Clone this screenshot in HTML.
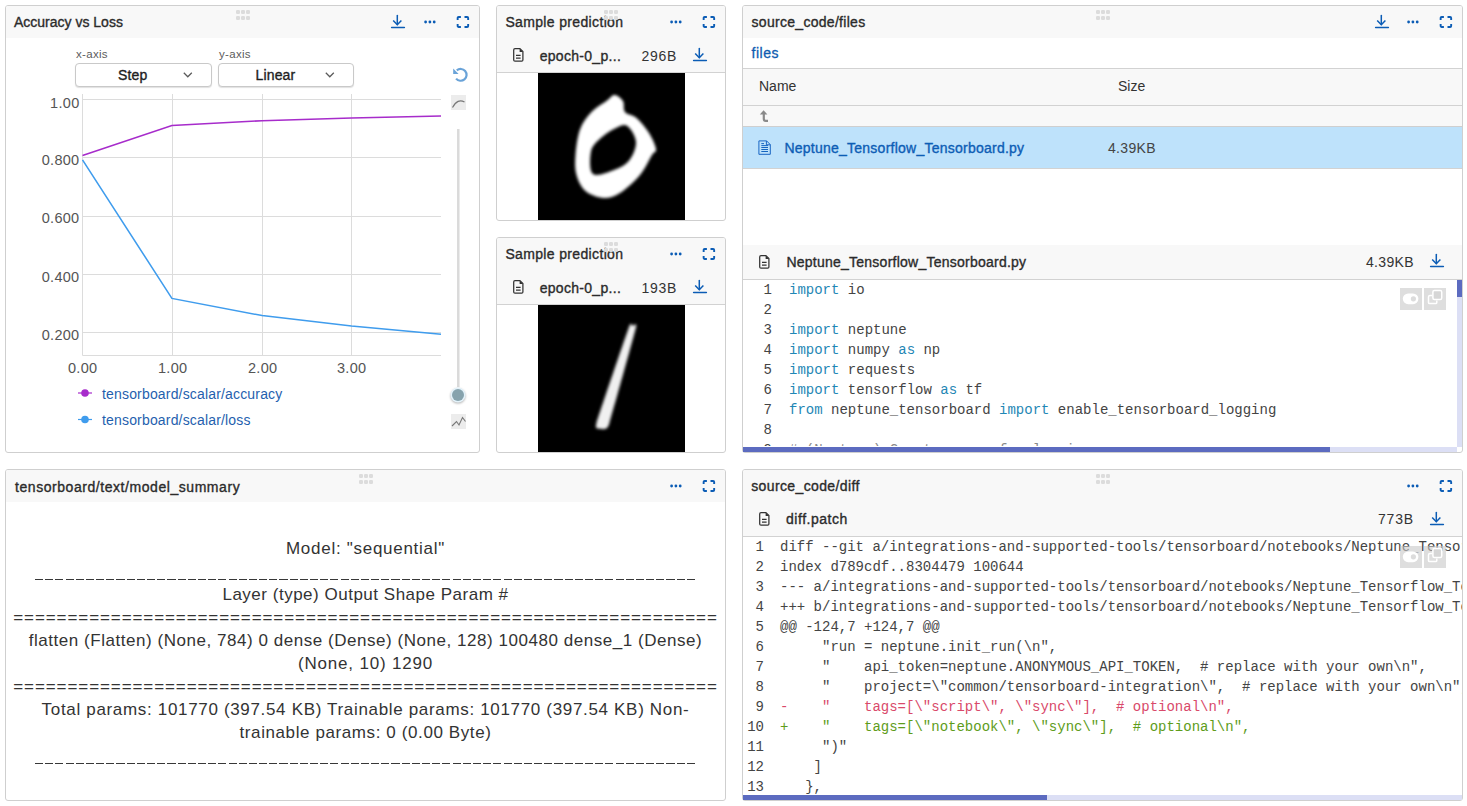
<!DOCTYPE html>
<html><head><meta charset="utf-8">
<style>
*{box-sizing:border-box;margin:0;padding:0}
html,body{width:1467px;height:806px;overflow:hidden;background:#fff}
body{position:relative;font-family:"Liberation Sans",sans-serif;color:#2e2e2e}
.a{position:absolute}
.p{position:absolute;border:1px solid #cfcfcf;border-radius:3px;background:#fff;overflow:hidden}
.hd{position:absolute;left:0;top:0;right:0;height:32px;background:#f8f8f8}
.t{position:absolute;white-space:pre;line-height:1}
.ttl{font-weight:400;font-size:13px;color:#2b2b2b;-webkit-text-stroke:0.35px currentColor}
.ic{position:absolute;overflow:visible}
.handle{position:absolute;width:14px;height:9px}
.mono{font-family:"Liberation Mono",monospace;font-size:14px;color:#444}
.kw{color:#1f87b5}
.sep{position:absolute;left:0;right:0;height:1px;background:#d2d2d2}
</style></head><body>

<!-- ============ PANEL 1 : Accuracy vs Loss ============ -->
<div class="p" style="left:5px;top:5px;width:475px;height:448px">
  <div class="hd"></div>
</div>


<!-- P1 content -->
<div class="t ttl" style="left:14px;top:15.15px;font-size:14px;letter-spacing:-0.002px">Accuracy vs Loss</div>
<svg class="ic" style="left:236px;top:10px" width="14" height="10"><g fill="#dcdcdc"><rect x="0" y="0" width="4" height="4" rx="1.3"/><rect x="5" y="0" width="4" height="4" rx="1.3"/><rect x="10" y="0" width="4" height="4" rx="1.3"/><rect x="0" y="6" width="4" height="4" rx="1.3"/><rect x="5" y="6" width="4" height="4" rx="1.3"/><rect x="10" y="6" width="4" height="4" rx="1.3"/></g></svg>
<svg class="ic" style="left:391px;top:15px" width="14" height="14"><g stroke="#0b5cb5" stroke-width="1.5" fill="none" stroke-linecap="round"><path d="M6.3 0.6V9.6"/><path d="M2.2 5.6L6.3 9.8L10.4 5.6" stroke-linecap="butt"/><path d="M0.6 12.4H13.4"/></g></svg>
<svg class="ic" style="left:423px;top:20px" width="14" height="4"><g fill="#0b5cb5"><circle cx="2.6" cy="2" r="1.4"/><circle cx="6.9" cy="2" r="1.4"/><circle cx="11.2" cy="2" r="1.4"/></g></svg>
<svg class="ic" style="left:457px;top:16px" width="12" height="12"><path d="M0.65 3.9V2Q0.65 0.95 1.7 0.95H3.9M7.5 0.95H10.1Q11.15 0.95 11.15 2V3.9M11.15 7.9V9.9Q11.15 10.95 10.1 10.95H7.5M3.9 10.95H1.7Q0.65 10.95 0.65 9.9V7.9" stroke="#0b5cb5" stroke-width="1.9" fill="none"/></svg>

<div class="t" style="left:76px;top:49.2px;font-size:11.5px;letter-spacing:0.3px;color:#5c5c5c">x-axis</div>
<div class="t" style="left:219px;top:49.2px;font-size:11.5px;letter-spacing:0.3px;color:#5c5c5c">y-axis</div>
<div class="a" style="left:75px;top:63px;width:137px;height:24px;border:1px solid #c9c9c9;border-radius:4px;box-shadow:0 1px 1px rgba(0,0,0,.12);background:#fff"></div>
<div class="a" style="left:218px;top:63px;width:136px;height:24px;border:1px solid #c9c9c9;border-radius:4px;box-shadow:0 1px 1px rgba(0,0,0,.12);background:#fff"></div>
<div class="t ttl" style="left:118px;top:68.2px;font-size:14px;letter-spacing:0.15px;color:#1e1e1e">Step</div>
<div class="t ttl" style="left:255.5px;top:68.2px;font-size:14px;letter-spacing:0.15px;color:#1e1e1e">Linear</div>
<svg class="ic" style="left:183px;top:72px" width="10" height="6"><path d="M0.8 0.8L4.8 4.8L8.8 0.8" stroke="#5a5a5a" stroke-width="1.25" fill="none"/></svg>
<svg class="ic" style="left:325px;top:72px" width="10" height="6"><path d="M0.8 0.8L4.8 4.8L8.8 0.8" stroke="#5a5a5a" stroke-width="1.25" fill="none"/></svg>

<svg class="ic" style="left:0;top:0" width="480" height="452">
 <g stroke="#dcdcdc" stroke-width="1" fill="none">
  <path d="M83 99.5H441M83 157.5H441M83 216.5H441M83 274.5H441M83 332.5H441"/>
  <path d="M172.5 94V355M262.5 94V355M351.5 94V355"/>
  <path d="M82.5 94V355.5H441"/>
 </g>
 <polyline points="82.5,155.4 171.9,125.4 262.1,120.7 351.5,118.1 441,115.9" stroke="#a72ccb" stroke-width="1.55" fill="none"/>
 <polyline points="82.5,159.8 171.9,298.4 262.1,315.6 351.5,326.1 441,334.2" stroke="#3f9ced" stroke-width="1.55" fill="none"/>
 <path d="M458.3 129V387" stroke="#dadada" stroke-width="2.5"/>
 <circle cx="458" cy="395" r="7.5" fill="#e3f2fa" style="filter:drop-shadow(0 1px 1px rgba(0,0,0,.3))"/>
 <circle cx="458" cy="395" r="6" fill="#87a3ad"/>
 <rect x="451" y="95" width="15" height="15" fill="#ececec"/>
 <path d="M452.5 107.5C456 101 460 99.5 464.5 102" stroke="#777" stroke-width="1.2" fill="none"/>
 <rect x="451" y="414" width="15" height="15" fill="#ececec"/>
 <path d="M452 426L456.5 421.5L459 425L462.5 417.5L465.5 421.5" stroke="#777" stroke-width="1.1" fill="none"/>
 <path d="M456.8 70.4A5.9 5.9 0 1 1 456.1 78.6" stroke="#6aa3d8" stroke-width="2.2" fill="none"/>
 <path d="M453.2 68.6V73.9H458.6Z" fill="#6aa3d8"/>
 <line x1="78" y1="393" x2="92" y2="393" stroke="#a72ccb" stroke-width="1.2"/>
 <circle cx="85" cy="393" r="3.8" fill="#a72ccb"/>
 <line x1="78" y1="419.5" x2="92" y2="419.5" stroke="#3f9ced" stroke-width="1.2"/>
 <circle cx="85" cy="419.5" r="3.8" fill="#3f9ced"/>
</svg>
<div class="t" style="right:1387.5px;top:95.5px;font-size:14.5px;letter-spacing:0.3px;color:#555">1.00</div>
<div class="t" style="right:1387.5px;top:153px;font-size:14.5px;letter-spacing:0.3px;color:#555">0.800</div>
<div class="t" style="right:1387.5px;top:211px;font-size:14.5px;letter-spacing:0.3px;color:#555">0.600</div>
<div class="t" style="right:1387.5px;top:270px;font-size:14.5px;letter-spacing:0.3px;color:#555">0.400</div>
<div class="t" style="right:1387.5px;top:328px;font-size:14.5px;letter-spacing:0.3px;color:#555">0.200</div>
<div class="t" style="left:68px;top:360.5px;font-size:14.5px;letter-spacing:0.3px;color:#555">0.00</div>
<div class="t" style="left:158px;top:360.5px;font-size:14.5px;letter-spacing:0.3px;color:#555">1.00</div>
<div class="t" style="left:248px;top:360.5px;font-size:14.5px;letter-spacing:0.3px;color:#555">2.00</div>
<div class="t" style="left:337px;top:360.5px;font-size:14.5px;letter-spacing:0.3px;color:#555">3.00</div>
<div class="t" style="left:102px;top:387px;font-size:14px;letter-spacing:0.17px;color:#1f5fae">tensorboard/scalar/accuracy</div>
<div class="t" style="left:102px;top:413px;font-size:14px;letter-spacing:0.17px;color:#1f5fae">tensorboard/scalar/loss</div>

<!-- ============ PANEL 2 ============ -->
<div class="p" style="left:496px;top:5px;width:230px;height:216px">
  <div class="hd" style="height:66px"></div>
  <div class="sep" style="top:66px"></div>
</div>

<!-- ============ PANEL 3 ============ -->
<div class="p" style="left:496px;top:237px;width:230px;height:216px">
  <div class="hd" style="height:66px"></div>
  <div class="sep" style="top:66px"></div>
</div>

<div class="t ttl" style="left:505.4px;top:15.15px;font-size:14px;letter-spacing:0.349px">Sample prediction</div>
<svg class="ic" style="left:604px;top:10px" width="14" height="10"><g fill="#dcdcdc"><rect x="0" y="0" width="4" height="4" rx="1.3"/><rect x="5" y="0" width="4" height="4" rx="1.3"/><rect x="10" y="0" width="4" height="4" rx="1.3"/><rect x="0" y="6" width="4" height="4" rx="1.3"/><rect x="5" y="6" width="4" height="4" rx="1.3"/><rect x="10" y="6" width="4" height="4" rx="1.3"/></g></svg>
<svg class="ic" style="left:669px;top:20px" width="14" height="4"><g fill="#0b5cb5"><circle cx="2.6" cy="2" r="1.4"/><circle cx="6.9" cy="2" r="1.4"/><circle cx="11.2" cy="2" r="1.4"/></g></svg>
<svg class="ic" style="left:703px;top:16px" width="12" height="12"><path d="M0.65 3.9V2Q0.65 0.95 1.7 0.95H3.9M7.5 0.95H10.1Q11.15 0.95 11.15 2V3.9M11.15 7.9V9.9Q11.15 10.95 10.1 10.95H7.5M3.9 10.95H1.7Q0.65 10.95 0.65 9.9V7.9" stroke="#0b5cb5" stroke-width="1.9" fill="none"/></svg>
<svg class="ic" style="left:513px;top:48px" width="11" height="14"><path d="M2 0.6H6.9L9.9 3.6V11.9Q9.9 13.1 8.7 13.1H2Q0.7 13.1 0.7 11.9V1.9Q0.7 0.6 2 0.6Z" stroke="#333" stroke-width="1.25" fill="none"/><path d="M6.6 0.6V3.9H9.9Z" fill="#333"/><path d="M3 7.4H7.6M3 10.2H7.6" stroke="#333" stroke-width="1.2"/></svg>
<div class="t ttl" style="left:539.7px;top:48.65px;font-size:14px;letter-spacing:0.297px">epoch-0_p...</div>
<div class="t" style="left:641.5px;top:48.5px;font-size:14px;letter-spacing:0.75px;color:#333">296B</div>
<svg class="ic" style="left:693px;top:48px" width="14" height="14"><g stroke="#0b5cb5" stroke-width="1.5" fill="none" stroke-linecap="round"><path d="M6.3 0.6V9.6"/><path d="M2.2 5.6L6.3 9.8L10.4 5.6" stroke-linecap="butt"/><path d="M0.6 12.4H13.4"/></g></svg>
<svg class="ic" style="left:538px;top:73px" width="147" height="147"><defs><filter id="bl0" x="-20%" y="-20%" width="140%" height="140%"><feGaussianBlur stdDeviation="1.8"/></filter></defs><rect width="147" height="147" fill="#000"/><g filter="url(#bl0)"><path d="M76.6 22.0C73.9 21.9 72.9 24.6 69.0 27.5C65.1 30.4 57.5 34.7 53.0 39.5C48.5 44.3 44.6 49.4 42.0 56.5C39.4 63.6 38.1 74.4 37.5 82.0C36.9 89.6 36.8 96.0 38.5 102.0C40.2 108.0 43.0 114.2 47.5 118.0C52.0 121.8 60.0 124.7 65.7 125.0C71.5 125.3 76.0 123.8 82.0 120.0C88.0 116.2 96.7 108.3 102.0 102.0C107.3 95.7 111.3 86.3 114.0 82.0C116.7 77.7 118.5 79.7 118.0 76.0C117.5 72.3 114.2 65.2 111.0 60.0C107.8 54.8 102.5 48.5 98.5 45.0C94.5 41.5 89.2 41.8 87.0 39.0C84.8 36.2 86.7 30.8 85.0 28.0C83.3 25.2 79.3 22.1 76.6 22.0ZM89.4 53.0C92.7 55.4 97.7 63.2 98.0 69.0C98.3 74.8 94.8 82.9 91.2 87.5C87.6 92.1 82.6 94.5 76.6 96.7C70.6 99.0 58.9 104.0 55.0 101.0C51.1 98.0 51.8 84.3 53.0 78.4C54.2 72.5 57.8 69.7 62.0 65.7C66.2 61.8 73.8 56.8 78.4 54.7C83.0 52.6 86.1 50.6 89.4 53.0Z" fill="#fff" fill-rule="evenodd"/></g></svg>
<div class="t ttl" style="left:505.4px;top:247.15px;font-size:14px;letter-spacing:0.349px">Sample prediction</div>
<svg class="ic" style="left:604px;top:242px" width="14" height="10"><g fill="#dcdcdc"><rect x="0" y="0" width="4" height="4" rx="1.3"/><rect x="5" y="0" width="4" height="4" rx="1.3"/><rect x="10" y="0" width="4" height="4" rx="1.3"/><rect x="0" y="6" width="4" height="4" rx="1.3"/><rect x="5" y="6" width="4" height="4" rx="1.3"/><rect x="10" y="6" width="4" height="4" rx="1.3"/></g></svg>
<svg class="ic" style="left:669px;top:252px" width="14" height="4"><g fill="#0b5cb5"><circle cx="2.6" cy="2" r="1.4"/><circle cx="6.9" cy="2" r="1.4"/><circle cx="11.2" cy="2" r="1.4"/></g></svg>
<svg class="ic" style="left:703px;top:248px" width="12" height="12"><path d="M0.65 3.9V2Q0.65 0.95 1.7 0.95H3.9M7.5 0.95H10.1Q11.15 0.95 11.15 2V3.9M11.15 7.9V9.9Q11.15 10.95 10.1 10.95H7.5M3.9 10.95H1.7Q0.65 10.95 0.65 9.9V7.9" stroke="#0b5cb5" stroke-width="1.9" fill="none"/></svg>
<svg class="ic" style="left:513px;top:280px" width="11" height="14"><path d="M2 0.6H6.9L9.9 3.6V11.9Q9.9 13.1 8.7 13.1H2Q0.7 13.1 0.7 11.9V1.9Q0.7 0.6 2 0.6Z" stroke="#333" stroke-width="1.25" fill="none"/><path d="M6.6 0.6V3.9H9.9Z" fill="#333"/><path d="M3 7.4H7.6M3 10.2H7.6" stroke="#333" stroke-width="1.2"/></svg>
<div class="t ttl" style="left:539.7px;top:280.65px;font-size:14px;letter-spacing:0.297px">epoch-0_p...</div>
<div class="t" style="left:641.5px;top:280.5px;font-size:14px;letter-spacing:0.75px;color:#333">193B</div>
<svg class="ic" style="left:693px;top:280px" width="14" height="14"><g stroke="#0b5cb5" stroke-width="1.5" fill="none" stroke-linecap="round"><path d="M6.3 0.6V9.6"/><path d="M2.2 5.6L6.3 9.8L10.4 5.6" stroke-linecap="butt"/><path d="M0.6 12.4H13.4"/></g></svg>
<svg class="ic" style="left:538px;top:305px" width="147" height="147"><defs><filter id="bl232" x="-20%" y="-20%" width="140%" height="140%"><feGaussianBlur stdDeviation="1.8"/></filter></defs><rect width="147" height="147" fill="#000"/><g filter="url(#bl232)"><path d="M91.0 22.0C93.4 15.5 94.0 21.0 94.5 21.0C95.0 21.0 99.5 16.0 98.0 22.5C96.5 29.0 73.6 111.2 71.5 118.0C69.4 124.8 67.2 123.6 66.5 124.0C65.8 124.4 61.0 123.9 60.5 123.5C60.0 123.1 56.5 124.8 58.5 118.0C60.5 111.2 88.6 28.5 91.0 22.0Z" fill="#f0f0f0"/></g></svg>

<!-- ============ PANEL 4 ============ -->
<div class="p" style="left:742px;top:5px;width:721px;height:448px">
  <div class="hd"></div>
</div>

<div class="t ttl" style="left:751.5px;top:15.15px;font-size:14px;letter-spacing:0.297px">source_code/files</div>
<svg class="ic" style="left:1096px;top:10px" width="14" height="10"><g fill="#dcdcdc"><rect x="0" y="0" width="4" height="4" rx="1.3"/><rect x="5" y="0" width="4" height="4" rx="1.3"/><rect x="10" y="0" width="4" height="4" rx="1.3"/><rect x="0" y="6" width="4" height="4" rx="1.3"/><rect x="5" y="6" width="4" height="4" rx="1.3"/><rect x="10" y="6" width="4" height="4" rx="1.3"/></g></svg><svg class="ic" style="left:1375px;top:15px" width="14" height="14"><g stroke="#0b5cb5" stroke-width="1.5" fill="none" stroke-linecap="round"><path d="M6.3 0.6V9.6"/><path d="M2.2 5.6L6.3 9.8L10.4 5.6" stroke-linecap="butt"/><path d="M0.6 12.4H13.4"/></g></svg><svg class="ic" style="left:1406px;top:20px" width="14" height="4"><g fill="#0b5cb5"><circle cx="2.6" cy="2" r="1.4"/><circle cx="6.9" cy="2" r="1.4"/><circle cx="11.2" cy="2" r="1.4"/></g></svg><svg class="ic" style="left:1440px;top:16px" width="12" height="12"><path d="M0.65 3.9V2Q0.65 0.95 1.7 0.95H3.9M7.5 0.95H10.1Q11.15 0.95 11.15 2V3.9M11.15 7.9V9.9Q11.15 10.95 10.1 10.95H7.5M3.9 10.95H1.7Q0.65 10.95 0.65 9.9V7.9" stroke="#0b5cb5" stroke-width="1.9" fill="none"/></svg>
<div class="t" style="left:751.5px;top:46px;font-size:14px;letter-spacing:0.55px;-webkit-text-stroke:0.3px currentColor;color:#0e5cb0">files</div>
<div class="a" style="left:743px;top:68px;width:719px;height:1px;background:#d2d2d2"></div>
<div class="a" style="left:743px;top:69px;width:719px;height:36px;background:#f8f8f8"></div>
<div class="a" style="left:743px;top:105px;width:719px;height:1px;background:#d2d2d2"></div>
<div class="a" style="left:743px;top:106px;width:719px;height:20px;background:#f8f8f8"></div>
<div class="a" style="left:743px;top:126px;width:719px;height:1px;background:#cfcfcf"></div>
<div class="a" style="left:743px;top:127px;width:719px;height:41px;background:#bee2fb"></div>
<div class="a" style="left:743px;top:168px;width:719px;height:1px;background:#d2d2d2"></div>
<div class="t" style="left:759px;top:79px;font-size:14px;color:#333">Name</div>
<div class="t" style="left:1118px;top:79px;font-size:14px;color:#333">Size</div>
<svg class="ic" style="left:759px;top:110px" width="10" height="13"><path d="M4.6 0.2L0.8 4.5H8.4Z" fill="#8a8a8a"/><path d="M4.8 4V9Q4.8 10.9 6.7 10.9H9" stroke="#8a8a8a" stroke-width="2.2" fill="none"/></svg>
<svg class="ic" style="left:758px;top:140px" width="13" height="15"><path d="M0.9 0.9H8.6L12.3 4.6V14.3H0.9Z" stroke="#1a66c4" stroke-width="1" fill="none" stroke-linejoin="round"/><path d="M8.4 0.9V4.8H12.3" stroke="#1a66c4" stroke-width="1" fill="none"/><path d="M3.3 3.6H6M3.3 5.6H10M3.3 7.5H10M3.3 9.5H10M3.3 11.5H10" stroke="#1565c0" stroke-width="1"/></svg>
<div class="t ttl" style="left:784.4px;top:140.65px;font-size:14px;letter-spacing:0.244px;color:#0d5db5">Neptune_Tensorflow_Tensorboard.py</div>
<div class="t" style="left:1108px;top:141px;font-size:14px;letter-spacing:0.33px;color:#444">4.39KB</div>
<div class="a" style="left:743px;top:245px;width:719px;height:34px;background:#f8f8f8"></div>
<div class="a" style="left:743px;top:279px;width:719px;height:1px;background:#d2d2d2"></div>
<svg class="ic" style="left:759px;top:255px" width="11" height="14"><path d="M2 0.6H6.9L9.9 3.6V11.9Q9.9 13.1 8.7 13.1H2Q0.7 13.1 0.7 11.9V1.9Q0.7 0.6 2 0.6Z" stroke="#333" stroke-width="1.25" fill="none"/><path d="M6.6 0.6V3.9H9.9Z" fill="#333"/><path d="M3 7.4H7.6M3 10.2H7.6" stroke="#333" stroke-width="1.2"/></svg>
<div class="t ttl" style="left:786.4px;top:255.15px;font-size:14px;letter-spacing:0.244px">Neptune_Tensorflow_Tensorboard.py</div>
<div class="t" style="left:1366px;top:255px;font-size:14px;letter-spacing:0.33px;color:#333">4.39KB</div>
<svg class="ic" style="left:1430px;top:254px" width="14" height="14"><g stroke="#0b5cb5" stroke-width="1.5" fill="none" stroke-linecap="round"><path d="M6.3 0.6V9.6"/><path d="M2.2 5.6L6.3 9.8L10.4 5.6" stroke-linecap="butt"/><path d="M0.6 12.4H13.4"/></g></svg>
<div class="a" style="left:743px;top:280px;width:714px;height:166px;overflow:hidden">
<div class="t mono" style="left:4px;top:3px;width:25px;text-align:right">1</div><div class="t mono" style="left:46px;top:3px"><span class="kw">import</span> io</div>
<div class="t mono" style="left:4px;top:23px;width:25px;text-align:right">2</div><div class="t mono" style="left:46px;top:23px"></div>
<div class="t mono" style="left:4px;top:43px;width:25px;text-align:right">3</div><div class="t mono" style="left:46px;top:43px"><span class="kw">import</span> neptune</div>
<div class="t mono" style="left:4px;top:63px;width:25px;text-align:right">4</div><div class="t mono" style="left:46px;top:63px"><span class="kw">import</span> numpy <span class="kw">as</span> np</div>
<div class="t mono" style="left:4px;top:83px;width:25px;text-align:right">5</div><div class="t mono" style="left:46px;top:83px"><span class="kw">import</span> requests</div>
<div class="t mono" style="left:4px;top:103px;width:25px;text-align:right">6</div><div class="t mono" style="left:46px;top:103px"><span class="kw">import</span> tensorflow <span class="kw">as</span> tf</div>
<div class="t mono" style="left:4px;top:123px;width:25px;text-align:right">7</div><div class="t mono" style="left:46px;top:123px"><span class="kw">from</span> neptune_tensorboard <span class="kw">import</span> enable_tensorboard_logging</div>
<div class="t mono" style="left:4px;top:143px;width:25px;text-align:right">8</div><div class="t mono" style="left:46px;top:143px"></div>
<div class="t mono" style="left:4px;top:163px;width:25px;text-align:right">9</div><div class="t mono" style="left:46px;top:163px"><span style="color:#8a8a8a"># (Neptune) Create a run for logging</span></div>
</div>
<svg class="ic" style="left:1400px;top:288px;z-index:3" width="46" height="22"><rect x="0" y="0" width="22" height="22" fill="rgba(200,200,200,0.6)"/><rect x="24" y="0" width="22" height="22" fill="rgba(200,200,200,0.6)"/><rect x="2.8" y="5.4" width="15.6" height="10.8" rx="5.4" fill="#fff"/><circle cx="13.4" cy="10.8" r="2.6" fill="#dcdcdc"/><path d="M28.5 9V14.4Q28.5 15.6 29.7 15.6H35.6Q36.8 15.6 36.8 14.4V12.6" stroke="#fff" stroke-width="1.5" fill="none"/><rect x="32.9" y="2.6" width="8.8" height="8.8" rx="1.5" stroke="#fff" stroke-width="1.5" fill="#d6d6d6"/><path d="M28.5 9Q28.5 7.4 30 7.4H32.2" stroke="#fff" stroke-width="1.5" fill="none"/></svg>
<div class="a" style="left:1457px;top:280px;width:5px;height:167px;background:#dcdff5"></div>
<div class="a" style="left:1457px;top:280px;width:5px;height:17px;background:#5c6bc0"></div>
<div class="a" style="left:743px;top:447px;width:714px;height:5px;background:#dcdff5"></div>
<div class="a" style="left:743px;top:447px;width:587px;height:5px;background:#5c6bc0"></div>

<!-- ============ PANEL 5 ============ -->
<div class="p" style="left:5px;top:469px;width:721px;height:332px">
  <div class="hd"></div>
</div>

<!-- ============ PANEL 6 ============ -->
<div class="p" style="left:742px;top:469px;width:721px;height:332px">
  <div class="hd" style="height:66px"></div>
  <div class="sep" style="top:66px"></div>
</div>

<div class="t ttl" style="left:15px;top:479.65px;font-size:14px;letter-spacing:0.555px">tensorboard/text/model_summary</div>
<svg class="ic" style="left:359px;top:474px" width="14" height="10"><g fill="#dcdcdc"><rect x="0" y="0" width="4" height="4" rx="1.3"/><rect x="5" y="0" width="4" height="4" rx="1.3"/><rect x="10" y="0" width="4" height="4" rx="1.3"/><rect x="0" y="6" width="4" height="4" rx="1.3"/><rect x="5" y="6" width="4" height="4" rx="1.3"/><rect x="10" y="6" width="4" height="4" rx="1.3"/></g></svg><svg class="ic" style="left:669px;top:484px" width="14" height="4"><g fill="#0b5cb5"><circle cx="2.6" cy="2" r="1.4"/><circle cx="6.9" cy="2" r="1.4"/><circle cx="11.2" cy="2" r="1.4"/></g></svg><svg class="ic" style="left:703px;top:480px" width="12" height="12"><path d="M0.65 3.9V2Q0.65 0.95 1.7 0.95H3.9M7.5 0.95H10.1Q11.15 0.95 11.15 2V3.9M11.15 7.9V9.9Q11.15 10.95 10.1 10.95H7.5M3.9 10.95H1.7Q0.65 10.95 0.65 9.9V7.9" stroke="#0b5cb5" stroke-width="1.9" fill="none"/></svg>
<div class="t" style="left:6px;width:719px;text-align:center;top:539.6px;font-size:17px;letter-spacing:0.72px;color:#333">Model: "sequential"</div>
<div class="a" style="left:35px;top:579px;width:661px;height:1px;background:repeating-linear-gradient(90deg,#383838 0 8.1px,transparent 8.1px 10.185px)"></div>
<div class="t" style="left:6px;width:719px;text-align:center;top:585.6px;font-size:17px;letter-spacing:0.51px;color:#333">Layer (type) Output Shape Param #</div>
<div class="t" style="left:6px;width:719px;text-align:center;top:608.6px;font-size:17px;letter-spacing:0.91px;color:#333">=================================================================</div>
<div class="t" style="left:6px;width:719px;text-align:center;top:631.6px;font-size:17px;letter-spacing:0.54px;color:#333">flatten (Flatten) (None, 784) 0 dense (Dense) (None, 128) 100480 dense_1 (Dense)</div>
<div class="t" style="left:6px;width:719px;text-align:center;top:654.6px;font-size:17px;letter-spacing:0.8px;color:#333">(None, 10) 1290</div>
<div class="t" style="left:6px;width:719px;text-align:center;top:677.6px;font-size:17px;letter-spacing:0.91px;color:#333">=================================================================</div>
<div class="t" style="left:6px;width:719px;text-align:center;top:700.6px;font-size:17px;letter-spacing:0.67px;color:#333">Total params: 101770 (397.54 KB) Trainable params: 101770 (397.54 KB) Non-</div>
<div class="t" style="left:6px;width:719px;text-align:center;top:723.6px;font-size:17px;letter-spacing:0.6px;color:#333">trainable params: 0 (0.00 Byte)</div>
<div class="a" style="left:35px;top:763px;width:661px;height:1px;background:repeating-linear-gradient(90deg,#383838 0 8.1px,transparent 8.1px 10.185px)"></div>
<div class="t ttl" style="left:751.2px;top:479.15px;font-size:14px;letter-spacing:0.376px">source_code/diff</div>
<svg class="ic" style="left:1096px;top:474px" width="14" height="10"><g fill="#dcdcdc"><rect x="0" y="0" width="4" height="4" rx="1.3"/><rect x="5" y="0" width="4" height="4" rx="1.3"/><rect x="10" y="0" width="4" height="4" rx="1.3"/><rect x="0" y="6" width="4" height="4" rx="1.3"/><rect x="5" y="6" width="4" height="4" rx="1.3"/><rect x="10" y="6" width="4" height="4" rx="1.3"/></g></svg><svg class="ic" style="left:1406px;top:484px" width="14" height="4"><g fill="#0b5cb5"><circle cx="2.6" cy="2" r="1.4"/><circle cx="6.9" cy="2" r="1.4"/><circle cx="11.2" cy="2" r="1.4"/></g></svg><svg class="ic" style="left:1440px;top:480px" width="12" height="12"><path d="M0.65 3.9V2Q0.65 0.95 1.7 0.95H3.9M7.5 0.95H10.1Q11.15 0.95 11.15 2V3.9M11.15 7.9V9.9Q11.15 10.95 10.1 10.95H7.5M3.9 10.95H1.7Q0.65 10.95 0.65 9.9V7.9" stroke="#0b5cb5" stroke-width="1.9" fill="none"/></svg>
<svg class="ic" style="left:759px;top:512px" width="11" height="14"><path d="M2 0.6H6.9L9.9 3.6V11.9Q9.9 13.1 8.7 13.1H2Q0.7 13.1 0.7 11.9V1.9Q0.7 0.6 2 0.6Z" stroke="#333" stroke-width="1.25" fill="none"/><path d="M6.6 0.6V3.9H9.9Z" fill="#333"/><path d="M3 7.4H7.6M3 10.2H7.6" stroke="#333" stroke-width="1.2"/></svg>
<div class="t ttl" style="left:786px;top:511.65px;font-size:14px;letter-spacing:0.534px">diff.patch</div>
<div class="t" style="left:1378px;top:512px;font-size:14px;letter-spacing:0.8px;color:#333">773B</div>
<svg class="ic" style="left:1430px;top:512px" width="14" height="14"><g stroke="#0b5cb5" stroke-width="1.5" fill="none" stroke-linecap="round"><path d="M6.3 0.6V9.6"/><path d="M2.2 5.6L6.3 9.8L10.4 5.6" stroke-linecap="butt"/><path d="M0.6 12.4H13.4"/></g></svg>
<div class="a" style="left:743px;top:537px;width:719px;height:258px;overflow:hidden">
<div class="t mono" style="left:4px;top:3px;width:17px;text-align:right">1</div><div class="t mono" style="left:37px;top:3px">diff --git a/integrations-and-supported-tools/tensorboard/notebooks/Neptune_Tensorflow_Tensorboard.ipynb b/integrations-and-supported-tools/tensorboard/notebooks/Neptune_Tensorflow_Tensorboard.ipynb</div>
<div class="t mono" style="left:4px;top:23px;width:17px;text-align:right">2</div><div class="t mono" style="left:37px;top:23px">index d789cdf..8304479 100644</div>
<div class="t mono" style="left:4px;top:43px;width:17px;text-align:right">3</div><div class="t mono" style="left:37px;top:43px">--- a/integrations-and-supported-tools/tensorboard/notebooks/Neptune_Tensorflow_Tensorboard.ipynb</div>
<div class="t mono" style="left:4px;top:63px;width:17px;text-align:right">4</div><div class="t mono" style="left:37px;top:63px">+++ b/integrations-and-supported-tools/tensorboard/notebooks/Neptune_Tensorflow_Tensorboard.ipynb</div>
<div class="t mono" style="left:4px;top:83px;width:17px;text-align:right">5</div><div class="t mono" style="left:37px;top:83px">@@ -124,7 +124,7 @@</div>
<div class="t mono" style="left:4px;top:103px;width:17px;text-align:right">6</div><div class="t mono" style="left:37px;top:103px">     "run = neptune.init_run(\n",</div>
<div class="t mono" style="left:4px;top:123px;width:17px;text-align:right">7</div><div class="t mono" style="left:37px;top:123px">     "    api_token=neptune.ANONYMOUS_API_TOKEN,  # replace with your own\n",</div>
<div class="t mono" style="left:4px;top:143px;width:17px;text-align:right">8</div><div class="t mono" style="left:37px;top:143px">     "    project=\"common/tensorboard-integration\",  # replace with your own\n",</div>
<div class="t mono" style="left:4px;top:163px;width:17px;text-align:right">9</div><div class="t mono" style="left:37px;top:163px"><span style="color:#d9496a">-    "    tags=[\"script\", \"sync\"],  # optional\n",</span></div>
<div class="t mono" style="left:4px;top:183px;width:17px;text-align:right">10</div><div class="t mono" style="left:37px;top:183px"><span style="color:#5e9c1a">+    "    tags=[\"notebook\", \"sync\"],  # optional\n",</span></div>
<div class="t mono" style="left:4px;top:203px;width:17px;text-align:right">11</div><div class="t mono" style="left:37px;top:203px">     ")"</div>
<div class="t mono" style="left:4px;top:223px;width:17px;text-align:right">12</div><div class="t mono" style="left:37px;top:223px">    ]</div>
<div class="t mono" style="left:4px;top:243px;width:17px;text-align:right">13</div><div class="t mono" style="left:37px;top:243px">   },</div>
</div>
<svg class="ic" style="left:1400px;top:546px;z-index:3" width="46" height="22"><rect x="0" y="0" width="22" height="22" fill="rgba(200,200,200,0.6)"/><rect x="24" y="0" width="22" height="22" fill="rgba(200,200,200,0.6)"/><rect x="2.8" y="5.4" width="15.6" height="10.8" rx="5.4" fill="#fff"/><circle cx="13.4" cy="10.8" r="2.6" fill="#dcdcdc"/><path d="M28.5 9V14.4Q28.5 15.6 29.7 15.6H35.6Q36.8 15.6 36.8 14.4V12.6" stroke="#fff" stroke-width="1.5" fill="none"/><rect x="32.9" y="2.6" width="8.8" height="8.8" rx="1.5" stroke="#fff" stroke-width="1.5" fill="#d6d6d6"/><path d="M28.5 9Q28.5 7.4 30 7.4H32.2" stroke="#fff" stroke-width="1.5" fill="none"/></svg>
<div class="a" style="left:743px;top:795px;width:719px;height:5px;background:#dcdff5"></div>
<div class="a" style="left:743px;top:795px;width:304px;height:5px;background:#5c6bc0"></div>

</body></html>
